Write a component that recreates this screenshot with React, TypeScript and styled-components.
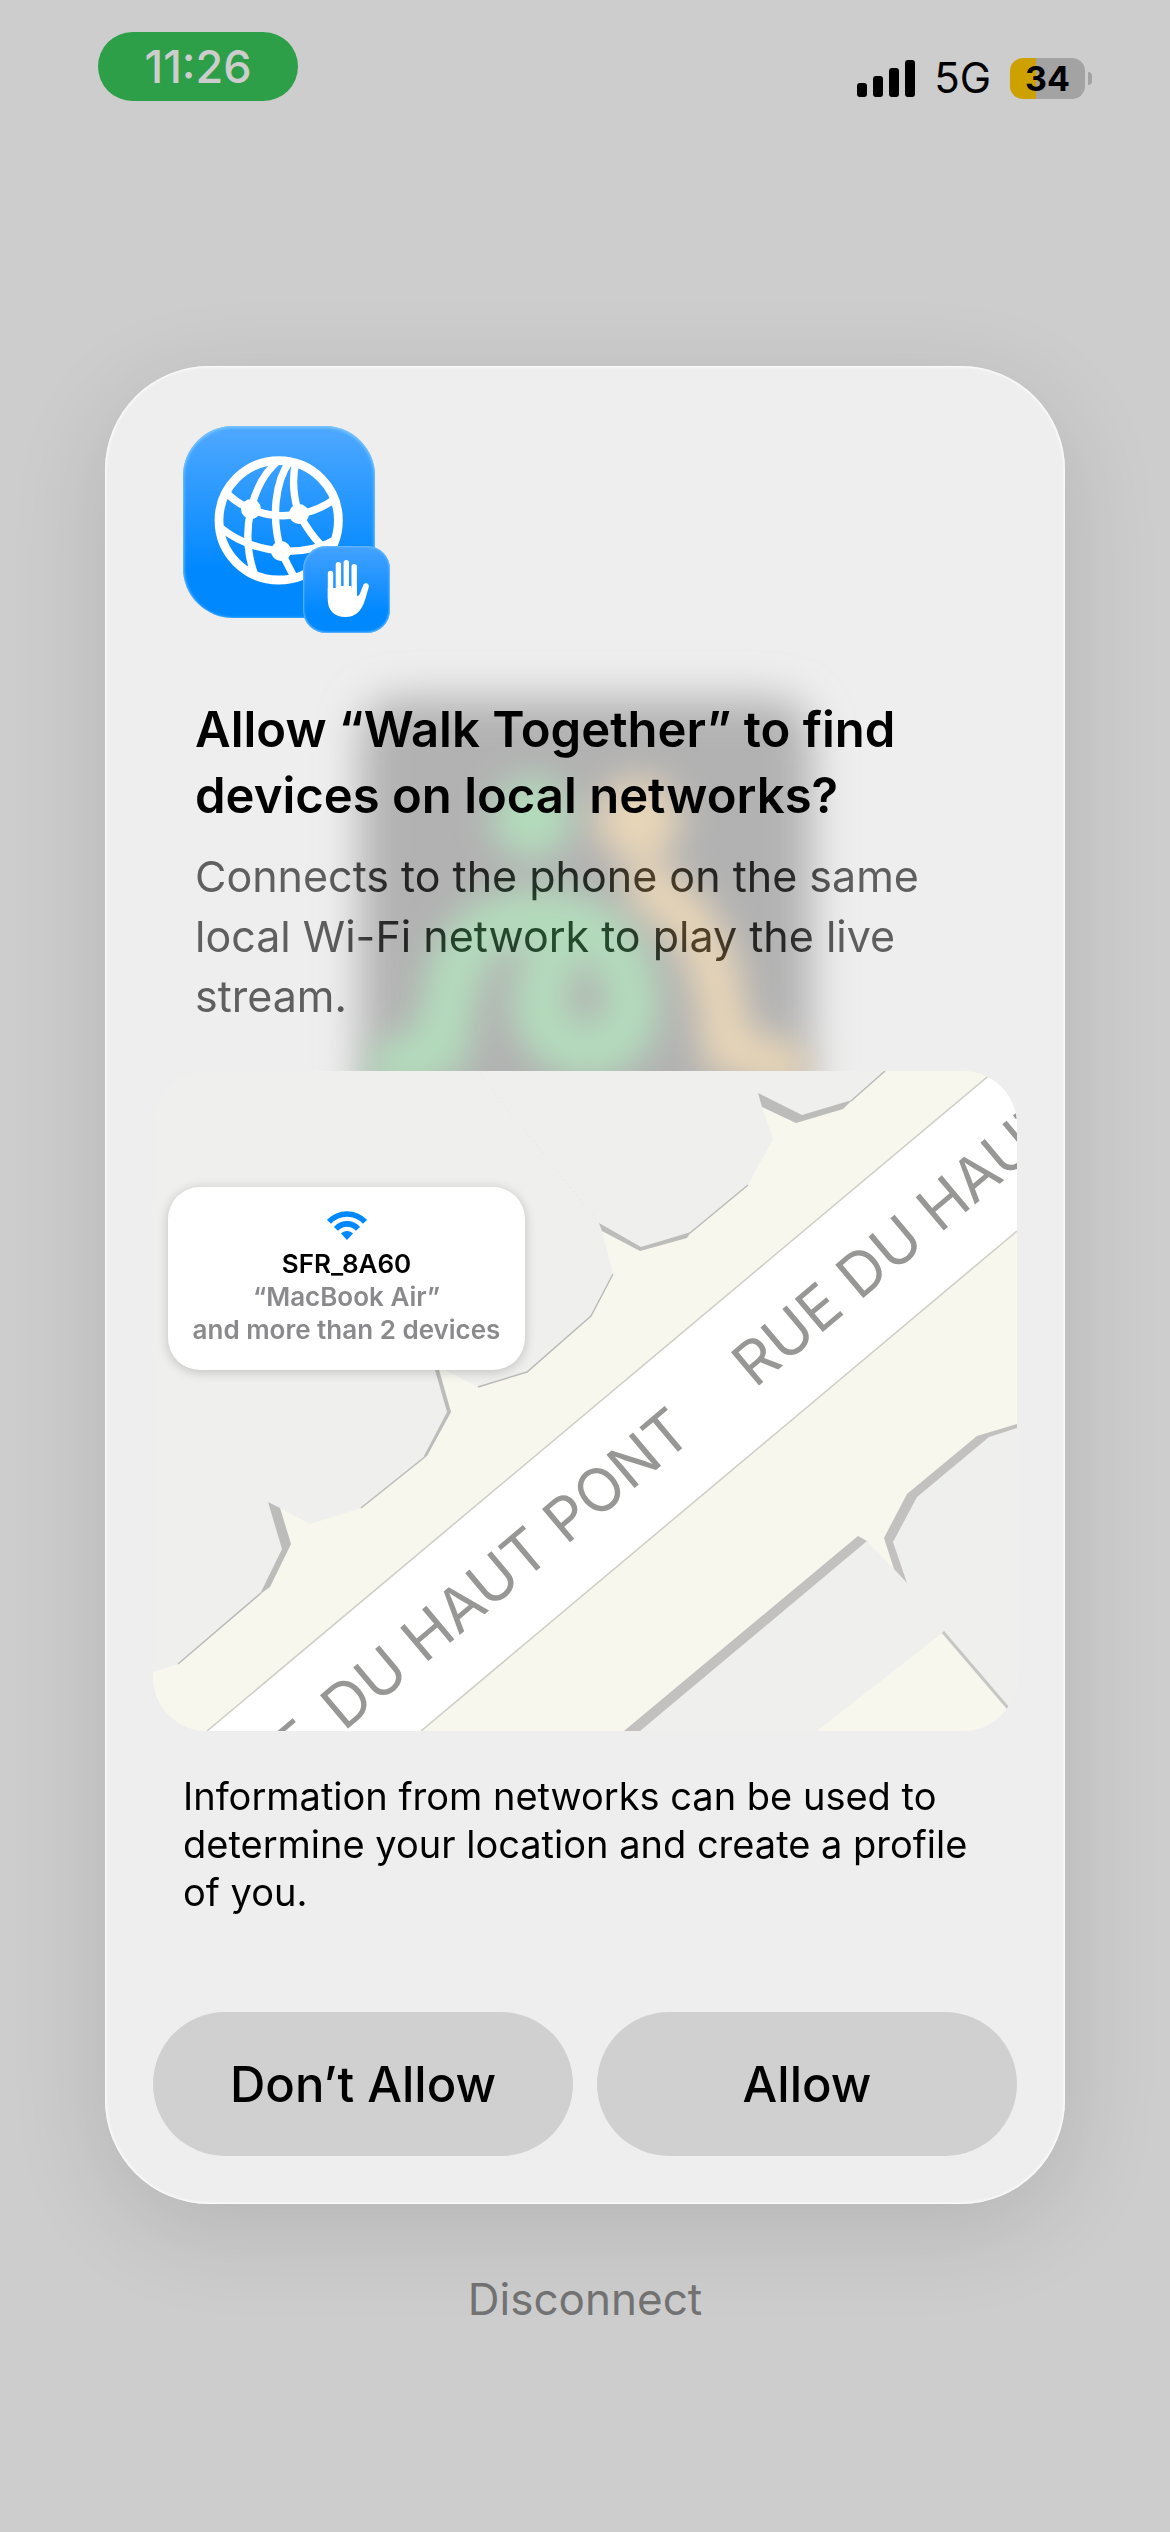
import styled, { createGlobalStyle } from "styled-components";

export default function App() {
  return (
    <Screen>
      <GlobalStyle />
      <StatusBar>
        <TimePill>11:26</TimePill>
        <StatusIcons>
          <SignalIcon />
          <Network>5G</Network>
          <Battery>
            <BatteryBody>34</BatteryBody>
            <BatteryCap />
          </Battery>
        </StatusIcons>
      </StatusBar>

      <Dialog role="dialog" aria-labelledby="dialog-title">
        <GlassBackdrop />
        <AppIcon>
          <GlobeIcon />
          <Badge>
            <HandIcon />
          </Badge>
        </AppIcon>
        <Title id="dialog-title">
          Allow “Walk Together” to find devices on local networks?
        </Title>
        <Description>
          Connects to the phone on the same local Wi-Fi network to play the live
          stream.
        </Description>
        <MapCard>
          <StreetMap />
          <Callout>
            <WifiIcon />
            <CalloutName>SFR_8A60</CalloutName>
            <CalloutText>“MacBook Air”</CalloutText>
            <CalloutText>and more than 2 devices</CalloutText>
          </Callout>
        </MapCard>
        <Info>
          Information from networks can be used to determine your location and
          create a profile of you.
        </Info>
        <Actions>
          <ActionButton type="button">Don’t Allow</ActionButton>
          <ActionButton type="button">Allow</ActionButton>
        </Actions>
      </Dialog>

      <DisconnectButton type="button">Disconnect</DisconnectButton>
    </Screen>
  );
}

const SignalIcon = () => (
  <svg width="58" height="37" viewBox="0 0 58 37" aria-hidden="true">
    <rect x="0" y="23" width="10" height="14" rx="3" />
    <rect x="16" y="16" width="10" height="21" rx="3" />
    <rect x="32" y="8" width="10" height="29" rx="3" />
    <rect x="48" y="0" width="10" height="37" rx="3" />
  </svg>
);

const GlobeIcon = () => (
  <svg width="192" height="192" viewBox="0 0 192 192" aria-hidden="true">
    <g fill="none" stroke="#fff" strokeWidth="7.4">
      <circle cx="95.7" cy="94.3" r="59.7" strokeWidth="8.8" />
      <path d="M95 35C82 46 73 62 68 83" />
      <path d="M107 35C92 55 88 92 98 125" />
      <path d="M113 35C109 52 110 70 116 88" />
      <path d="M43 66C50 74 58 79 68 83C84 90 101 91 116 88C130 86 142 80 152 73" />
      <path d="M68 83C63 104 64 128 72 150" />
      <path d="M38 102C54 115 75 123 98 125C118 126 136 123 152 114" />
      <path d="M116 88C122 99 128 109 138 119" />
      <path d="M98 125C102 134 106 141 111 151" />
    </g>
    <g fill="#fff">
      <circle cx="68" cy="83" r="10" />
      <circle cx="116" cy="88" r="10" />
      <circle cx="98" cy="125" r="10" />
    </g>
  </svg>
);

const HandIcon = () => (
  <svg width="87" height="87" viewBox="0 0 87 87" aria-hidden="true">
    <g stroke="#fff" strokeWidth="5.4" strokeLinecap="round">
      <path d="M27.5 27.5V52" />
      <path d="M35.4 18.8V46" />
      <path d="M43.3 16.8V46" />
      <path d="M51.2 20.8V52" />
    </g>
    <path
      fill="#fff"
      d="M24.8 42H38V40H48.5V42H53.9V50C55.3 50 56.2 49.2 57 47.5L60.2 39.3C61.8 35.8 66.6 37.2 65.8 41L62 54C58.5 65 52.5 71 42.5 71C31 71 24.8 64 24.8 54Z"
    />
  </svg>
);

const WifiIcon = () => (
  <svg width="40" height="29" viewBox="0 0 40 29" aria-hidden="true">
    <g fill="none" stroke="#0088ff" strokeWidth="5.6">
      <path d="M2 10.8C12 0.4 28 0.4 38 10.8" />
      <path d="M9 17.8C15 11.2 25 11.2 31 17.8" />
    </g>
    <path fill="#0088ff" d="M14 22.6C17 19.2 23 19.2 26 22.6L20 29Z" />
  </svg>
);

const GlassBackdrop = () => (
  <Glass viewBox="0 0 960 760" aria-hidden="true">
    <defs>
      <filter id="wide" x="-30%" y="-30%" width="160%" height="160%">
        <feGaussianBlur stdDeviation="20" />
      </filter>
      <filter id="narrow" x="-30%" y="-30%" width="160%" height="160%">
        <feGaussianBlur stdDeviation="17" />
      </filter>
    </defs>
    <rect x="255" y="332" width="452" height="480" rx="40" fill="#b2b2b2" filter="url(#wide)" />
    <g filter="url(#narrow)" fill="none" strokeWidth="54" strokeLinecap="round">
      <g stroke="#b3dcbc">
        <circle cx="427" cy="452" r="40" fill="#b3dcbc" stroke="none" />
        <path d="M290 700L335 684C350 610 345 558 427 550C500 550 524 590 527 640C527 700 440 700 434 640C434 620 440 610 446 600" />
      </g>
      <g stroke="#e8d6b8">
        <circle cx="533" cy="454" r="42" fill="#e8d6b8" stroke="none" />
        <path strokeWidth="48" d="M545 520C600 560 612 590 622 684L680 700" />
      </g>
    </g>
  </Glass>
);

const StreetMap = () => (
  <MapSvg viewBox="0 0 864 660" preserveAspectRatio="xMidYMid slice" role="img" aria-label="Map">
    <rect width="864" height="660" fill="#efefed" />
    <path
      fill="#f7f7ee"
      d="M732 0L690 38L643 52L609 36L620 68L595 114L537 163L487 180L449 160L460 203L438 245L374 301L325 316L286 296L298 341L274 385L208 437L157 453L127 437L138 473L117 516L25 593L0 601V660H864V0Z"
    />
    <g fill="#bcbcba">
      <path d="M605 22L649 44L699 29L690 38L643 52L609 36Z" />
      <path d="M446 152L488 176L538 161L534 167L487 180L449 160Z" />
      <path d="M282 299L294 341L271 385L274 385L298 341L286 299Z" />
      <path d="M115 431L129 478L107 523L117 516L138 473L127 437Z" />
    </g>
    <g fill="none" stroke="#b9b9b7" strokeWidth="1.4">
      <path d="M732 0L698 30" />
      <path d="M595 114L537 162" />
      <path d="M460 203L438 245L374 301L325 316" />
      <path d="M273 385L208 437" />
      <path d="M108 522L25 593" />
    </g>
    <path d="M327 3L446 152" stroke="#e3e3e1" strokeWidth="1" strokeDasharray="1 4" />

    <path fill="#fff" d="M54 660L864 -20V160L268 660Z" />
    <path fill="none" stroke="#d0cfc8" strokeWidth="1.6" d="M54 660L864 -19M268 660L864 160" />

    <path
      fill="#efefed"
      d="M471 660L705 465L714 470L741 498L731 467L754 423L824 365L864 353V660Z"
    />
    <g fill="#c2c1bf">
      <path d="M471 660L705 465L714 470L487 660Z" />
      <path d="M741 498L731 467L754 423L824 365L864 353V357L836 366L764 426L740 471L754 512Z" />
    </g>
    <path fill="#f7f7ee" d="M664 660L789 562L854 637V660Z" />
    <path d="M790 561L855 637" stroke="#c6c6c4" strokeWidth="3" />

    <StreetName transform="translate(171 678) rotate(-40)" textAnchor="end">
      RUE
    </StreetName>
    <StreetName transform="translate(191 661) rotate(-40)">DU HAUT PONT</StreetName>
    <StreetName transform="translate(602 318) rotate(-40)">RUE DU HAUT PONT</StreetName>
  </MapSvg>
);

const GlobalStyle = createGlobalStyle`
  * {
    box-sizing: border-box;
  }
  body {
    margin: 0;
    background: #cdcdcd;
    font-family: Inter, "Liberation Sans", sans-serif;
    color: #000;
  }
  button {
    font-family: inherit;
    border: none;
    cursor: pointer;
  }
`;

const Screen = styled.main`
  display: flex;
  flex-direction: column;
  min-height: 100vh;
  background: #cdcdcd;
`;

const StatusBar = styled.header`
  display: flex;
  justify-content: space-between;
  align-items: flex-start;
  padding: 32px 78px 0 98px;
`;

const TimePill = styled.time`
  display: flex;
  align-items: center;
  justify-content: center;
  width: 200px;
  height: 69px;
  border-radius: 36px;
  background: #2d9f49;
  color: #cdcdcd;
  font-size: 45px;
  font-weight: 500;
`;

const StatusIcons = styled.div`
  display: flex;
  align-items: center;
  gap: 19px;
  padding-top: 25px;
`;

const Network = styled.span`
  font-size: 42px;
  line-height: 42px;
`;

const Battery = styled.div`
  display: flex;
  align-items: center;
  gap: 3px;
`;

const BatteryBody = styled.div`
  display: flex;
  align-items: center;
  justify-content: center;
  width: 75px;
  height: 41px;
  border-radius: 13px;
  background: linear-gradient(to right, #cda100 35%, #a3a3a3 35%);
  font-size: 34px;
  font-weight: 700;
`;

const BatteryCap = styled.div`
  width: 4px;
  height: 13px;
  border-radius: 0 4px 4px 0;
  background: #a3a3a3;
`;

const Dialog = styled.section`
  position: relative;
  isolation: isolate;
  display: flex;
  flex-direction: column;
  margin: 265px 105px 0;
  padding: 60px 48px 48px;
  border-radius: 104px;
  background: #eeeeee;
  box-shadow:
    inset 0 0 3px 1px #fff,
    0 24px 100px rgba(0, 0, 0, 0.12);
`;

/* frosted view of the app logo behind the dialog */
const Glass = styled.svg`
  position: absolute;
  z-index: -1;
  top: 0;
  left: 0;
  width: 100%;
`;

const AppIcon = styled.div`
  position: relative;
  width: 192px;
  height: 192px;
  margin-left: 30px;
  border-radius: 50px;
  background: linear-gradient(#4aa6ff 5%, #0088ff 75%);
  box-shadow: inset 0 1px 3px 1px #7cc6ff;
`;

const Badge = styled.div`
  position: absolute;
  right: -15px;
  bottom: -15px;
  width: 87px;
  height: 87px;
  border-radius: 23px;
  background: linear-gradient(#45a2ff, #0088ff 75%);
  box-shadow: inset 0 0 2px 1px #6cbcff;
`;

const Title = styled.h1`
  margin: 79px 42px 0;
  font-size: 49px;
  line-height: 66px;
  font-weight: 600;
`;

const Description = styled.p`
  margin: 17px 42px 0;
  font-size: 43px;
  line-height: 60px;
  color: #8f8f8f;
  mix-blend-mode: difference;
`;

const MapCard = styled.div`
  position: relative;
  margin-top: 45px;
  border-radius: 54px;
  overflow: hidden;
`;

const MapSvg = styled.svg`
  display: block;
  width: 100%;
`;

const StreetName = styled.text`
  font-size: 60px;
  fill: #979795;
`;

const Callout = styled.div`
  position: absolute;
  top: 116px;
  left: 15px;
  display: flex;
  flex-direction: column;
  align-items: center;
  width: 357px;
  height: 183px;
  padding-top: 24px;
  border-radius: 32px;
  background: #fff;
  box-shadow: 0 2px 12px rgba(0, 0, 0, 0.2);
`;

const CalloutText = styled.span`
  font-size: 26px;
  line-height: 33px;
  font-weight: 600;
  color: #8a8a8c;
`;

const CalloutName = styled(CalloutText)`
  margin-top: 7px;
  color: #000;
`;

const Info = styled.p`
  margin: 41px 30px 0;
  font-size: 38px;
  line-height: 48px;
`;

const Actions = styled.div`
  display: grid;
  grid-template-columns: 1fr 1fr;
  gap: 24px;
  margin-top: 96px;
`;

const ActionButton = styled.button`
  height: 144px;
  border-radius: 72px;
  background: #d0d0d0;
  color: #000;
  font-size: 49px;
  font-weight: 500;
`;

const DisconnectButton = styled.button`
  align-self: center;
  margin-top: 65px;
  padding: 0;
  background: none;
  color: #737374;
  font-size: 44px;
  line-height: 60px;
`;
